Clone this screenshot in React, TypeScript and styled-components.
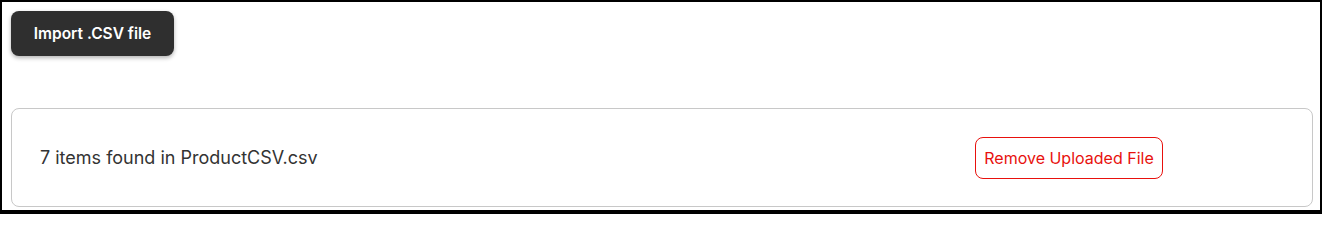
import styled, { createGlobalStyle } from 'styled-components';

const GlobalStyle = createGlobalStyle`
  * { box-sizing: border-box; }
  body {
    margin: 0;
    font-family: Inter, "Liberation Sans", sans-serif;
    background: #fff;
  }
`

const App = () => {
  const fileName = "ProductCSV.csv"
  const count = 7

  return (
    <Frame>
      <GlobalStyle />
      <ImportButton>Import .CSV file</ImportButton>
      <Card>
        <Summary>{count} items found in {fileName}</Summary>
        <Actions>
          <RemoveButton>Remove Uploaded File</RemoveButton>
        </Actions>
      </Card>
    </Frame>
  )
}

export default App;

const Frame = styled.div`
  width: 1322px;
  height: 214px;
  border: 2px solid #000;
  border-bottom-width: 4px;
  padding: 9px 7px 0 9px;
  display: flex;
  flex-direction: column;
  align-items: flex-start;
  overflow: hidden;
`

const ImportButton = styled.button`
  flex-shrink: 0;
  width: 163px;
  height: 45px;
  margin-bottom: 52px;
  border: none;
  border-radius: 8px;
  background-color: #2f2f2f;
  color: #fff;
  font-family: Inter, "Liberation Sans", sans-serif;
  font-size: 15.5px;
  font-weight: 600;
  cursor: pointer;
  box-shadow: 0 2px 4px rgba(0, 0, 0, 0.3);
`

const Card = styled.section`
  flex-shrink: 0;
  width: 100%;
  height: 99px;
  border: 1px solid #c8c8c8;
  border-radius: 8px;
  padding: 0 28px;
  display: grid;
  grid-template-columns: 3fr 1fr;
  gap: 8px;
  align-items: center;
`

const Summary = styled.p`
  margin: 0;
  font-size: 18px;
  color: #333;
`

const Actions = styled.div`
  display: flex;
  justify-content: flex-start;
`

const RemoveButton = styled.button`
  width: 188px;
  height: 42px;
  background: #fff;
  border: 1px solid #e8110d;
  border-radius: 8px;
  color: #e8110d;
  font-family: Inter, "Liberation Sans", sans-serif;
  font-size: 16px;
  cursor: pointer;
`
